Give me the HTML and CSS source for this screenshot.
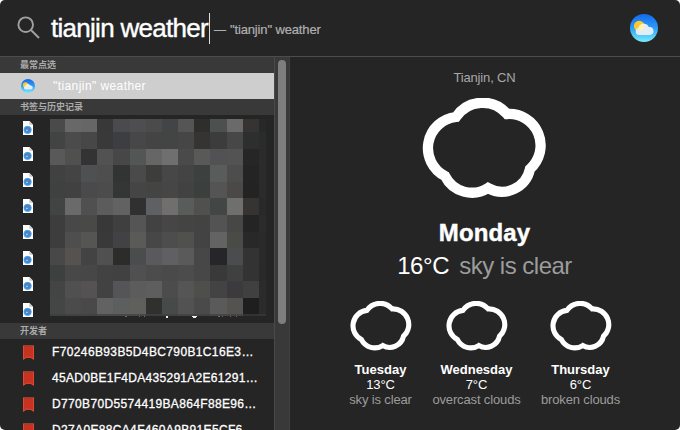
FILE: index.html
```html
<!DOCTYPE html>
<html lang="zh-CN">
<head>
<meta charset="utf-8">
<title>tianjin weather</title>
<link rel="stylesheet" href="styles.css">
</head>
<body>
<svg class="defs" aria-hidden="true">
  <defs>
    <linearGradient id="sky" x1="0" y1="0" x2="0" y2="1"><stop offset="0" stop-color="#1268ee"/><stop offset=".5" stop-color="#2e9df5"/><stop offset="1" stop-color="#78edfc"/></linearGradient>
    <symbol id="weather" viewBox="0 0 28 28">
      <circle cx="14" cy="14" r="14" fill="url(#sky)"/>
      <circle cx="9.2" cy="12" r="5.3" fill="#fdc92f"/>
      <path d="M9 21a3.6 3.6 0 0 1-.5-7.1A5.5 5.5 0 0 1 18.8 13a3.8 3.8 0 0 1 1.3 8Z" fill="#e3edf8"/>
      <path d="M8.6 14a5.5 5.5 0 0 1 5.7-4.2 5.3 5.3 0 0 1-4.6 7.2Z" fill="#fff2b5"/>
    </symbol>
    <symbol id="cloud" viewBox="42 38 125 101">
      <path d="M76 57A32 32 0 0 1 127 54A31.5 31.5 0 0 1 150 109A28.6 28.6 0 0 1 108 128A30 30 0 0 1 65 116A31.3 31.3 0 0 1 76 57Z" fill="none" stroke="#fff" stroke-width="10.3"/>
    </symbol>
    <symbol id="page" viewBox="0 0 10 14">
      <path d="M0 0H6.5L10 3.8V14H0Z" fill="#fff"/>
      <path d="M6.3 0L10 3.8H6.3Z" fill="#c9c9c9"/>
      <circle cx="4.6" cy="8.8" r="3.9" fill="#2f8ce0"/>
      <circle cx="4.6" cy="8.8" r="3.6" fill="none" stroke="#79aee0" stroke-width=".5"/>
      <path d="M2.7 10.6L4.1 8.3L5.1 9.3Z" fill="#e8f3fd"/>
      <path d="M6.7 6.7L4 8.2L5.2 9.4Z" fill="#e0523c"/>
    </symbol>
    <symbol id="mark" viewBox="0 0 11 15">
      <path d="M0 0H11V15L7.8 12.8H3.2L0 15Z" fill="#c73320"/>
      <path d="M0 .7H11" stroke="#96402f" stroke-width="1.4"/>
      <path d="M.5 1V14.2L3.2 12.3H7.8L10.5 14.2V1" fill="none" stroke="#dc4a33"/>
    </symbol>
  </defs>
</svg>
<div class="window">
  <header class="search">
    <svg class="lens" viewBox="0 0 24 24"><circle cx="8.7" cy="8.7" r="7.3"/><path d="M14 14L22 22"/></svg>
    <span class="query">tianjin weather</span><i class="caret"></i>
    <span class="hint"><span class="dash">—</span>"tianjin" weather</span>
    <svg class="app"><use href="#weather"/></svg>
  </header>
  <main class="body">
    <aside class="results">
      <h2>最常点选</h2>
      <div class="row selected"><svg class="mini"><use href="#weather"/></svg><span>"tianjin" weather</span></div>
      <h2>书签与历史记录</h2>
      <div class="history">
        <div class="pages">
          <svg><use href="#page"/></svg><svg><use href="#page"/></svg><svg><use href="#page"/></svg><svg><use href="#page"/></svg>
          <svg><use href="#page"/></svg><svg><use href="#page"/></svg><svg><use href="#page"/></svg><svg><use href="#page"/></svg>
        </div>
        <div>
          <div class="mosaic" id="mosaic"></div>
          <svg class="specks" viewBox="0 0 216 2"><path d="M116 0h2v2h-2zM142 0h5v1h-1v1h-3v-1h-1z" fill="#eee"/><path d="M75 0h2v1h-2zM89 0h1v1h-1zM94 0h1v1h-1zM168 0h2v1h-2zM172 0h1v1h-1zM180 0h1v1h-1zM186 0h1v1h-1z" fill="#706a60"/></svg>
        </div>
      </div>
      <h2>开发者</h2>
      <div class="row"><svg class="mark"><use href="#mark"/></svg><span class="c1">F70246B93B5D4BC790B1C16E3…</span></div>
      <div class="row"><svg class="mark"><use href="#mark"/></svg><span class="c2">45AD0BE1F4DA435291A2E61291…</span></div>
      <div class="row"><svg class="mark"><use href="#mark"/></svg><span class="c3">D770B70D5574419BA864F88E96…</span></div>
      <div class="row"><svg class="mark"><use href="#mark"/></svg><span class="c4">D27A0E88CA4F460A9B91E5CF6…</span></div>
    </aside>
    <div class="track"><div class="thumb"></div></div>
    <section class="preview">
      <div class="place">Tianjin, CN</div>
      <svg class="big"><use href="#cloud"/></svg>
      <div class="today">Monday</div>
      <div class="now"><span class="temp">16°C</span><span class="state">sky is clear</span></div>
      <div class="days">
        <div class="day"><svg><use href="#cloud"/></svg><b>Tuesday</b><span>13°C</span><em>sky is clear</em></div>
        <div class="day"><svg><use href="#cloud"/></svg><b>Wednesday</b><span>7°C</span><em>overcast clouds</em></div>
        <div class="day"><svg><use href="#cloud"/></svg><b>Thursday</b><span>6°C</span><em>broken clouds</em></div>
      </div>
    </section>
  </main>
</div>
<script src="mosaic.js"></script>
</body>
</html>
```
FILE: mosaic.js
```js
const rows = [
  "4a4a4a 686868 666666 383838 4b4b4d 4e4e50 4b4b4b 434446 555555 2e2e2c 4c504f 6a6a6a 353432 282828",
  "424444 4b4b4b 474747 393939 3c3e41 474747 444444 434545 464646 353430 3c3c3c 474747 2d2e2e 2a2c2c",
  "595959 50504e 333333 525252 474747 525655 666666 6f6f6f 4a4a4a 595957 525255 535353 262626 2b2b2b",
  "414141 444444 4e5052 4e4e4e 323434 4a4a4a 3d3d3b 474747 444444 3c403f 585c5b 4d4d4d 242424 2b2b2b",
  "3f4141 414141 4a4a4a 4c4c4c 343636 454545 444444 464646 424242 3b3f3e 545454 4b4947 232323 2b2b2b",
  "414443 6a6a6a 505050 5c5c5c 626262 303030 5e6063 706f6d 585c5b 50504e 424645 6f6f6d 353432 292929",
  "3d3d3d 484848 494947 383838 3f3f3f 555555 424242 464646 444442 434343 535353 474745 242424 2b2b2b",
  "3d3d3d 4e4e4e 555553 393939 424244 5a5a57 474747 4d4d4d 50504d 434343 636363 4a4a46 282828 2a2a2a",
  "484848 555250 434343 505050 2c2c2a 4a4c4e 5a5a5c 606062 5a5a5a 474747 262628 4a4c4e 333333 2a2a2a",
  "3c403f 484848 474747 424242 414141 505050 4c4c4c 4a4a4a 4c4c4c 474747 393939 404040 333333 292929",
  "444444 505050 555253 424242 555558 5c5c5c 5e5e5e 4c4c4c 555555 4e4e4b 434343 3b3b3e 404040 2b2b2b",
  "434645 4b4b4b 494949 626262 5c5f5e 5f5f5c 30302e 464a49 525252 4a4a4a 5a5a5a 555350 1e1e1e 2b2b2b",
  "3f3f3f 424242 424242 484848 484848 484848 3c3c3c 404040 444444 414141 464646 454545 323232 343434"
];
const grid = document.getElementById("mosaic");
rows.join(" ").split(" ").forEach(c => {
  const cell = document.createElement("i");
  cell.style.background = "#" + c;
  grid.append(cell);
});
```
FILE: styles.css
```css
* { box-sizing: border-box; }
body { margin: 0; background: #fff; font-family: "Liberation Sans", "Noto Sans CJK SC", sans-serif; color: #fff; }
svg { display: block; flex: none; }
.defs { position: absolute; width: 0; height: 0; }
.window { width: 680px; height: 430px; overflow: hidden; background: #252525; border-radius: 5px; display: flex; flex-direction: column; }
.search { height: 57px; flex: none; display: flex; align-items: center; padding: 0 22px 0 17px; border-bottom: 1px solid #4c4c4c; white-space: nowrap; }
.lens { width: 24px; height: 24px; fill: none; stroke: #a0a0a0; stroke-width: 1.9; }
.query { width: 158px; margin-left: 10px; font-size: 26px; letter-spacing: -.72px; -webkit-text-stroke: .4px #fff; }
.caret { width: 1px; height: 31px; background: #ddd; }
.hint { margin: 3px 0 0 4px; font-size: 13px; color: #b0b0b0; letter-spacing: -.14px; -webkit-text-stroke: .2px #b0b0b0; }
.dash { display: inline-block; width: 16px; font-size: 12px; }
.app { width: 28px; height: 28px; margin-left: auto; }
.body { flex: 1; min-height: 0; display: flex; }
.results { width: 274px; flex: none; overflow: hidden; }
h2 { margin: 0; height: 16px; padding-left: 20px; background: #393939; color: #aaa; font-size: 9px; line-height: 16px; font-weight: 700; font-family: "Noto Sans CJK SC", sans-serif; }
.row { height: 26px; display: flex; align-items: center; padding-left: 23px; font-size: 12px; white-space: nowrap; -webkit-text-stroke: .3px #fff; }
.row span { margin-left: 18px; }
.row .c1 { letter-spacing: .37px; }
.row .c2 { letter-spacing: .29px; }
.row .c3, .row .c4 { letter-spacing: .34px; }
.selected { background: #cecece; padding-left: 21px; -webkit-text-stroke: 0; }
.selected span { letter-spacing: .42px; }
.mini { width: 14px; height: 14px; }
.mark { width: 11px; height: 15px; }
.history { height: 208px; display: flex; }
.pages { width: 50px; padding: 6px 0 0 23px; display: flex; flex-direction: column; gap: 12px; }
.pages svg { width: 10px; height: 14px; }
.mosaic { margin-top: 4px; height: 197px; display: grid; grid-template-columns: 15px 16px 16px 16px 17px 16px 16px 16px 16px 16px 17px 16px 16px 7px; grid-template-rows: 13px 17px 16px 17px 16px 17px 17px 16px 17px 16px 17px 16px 2px; }
.specks { width: 216px; height: 2px; }
.track { width: 16px; flex: none; background: #393939; border-left: 1px solid #4a4a4a; border-right: 1px solid #3f3f3f; padding: 3px 0 0 3px; }
.thumb { width: 8px; height: 264px; border-radius: 4px; background: #7e7e7e; }
.preview { flex: 1; padding-right: 1px; display: flex; flex-direction: column; align-items: center; white-space: nowrap; }
.place { height: 41px; padding-top: 13px; font-size: 13px; line-height: 15px; color: #a8a8a8; letter-spacing: -.15px; }
.big { width: 125px; height: 101px; }
.today { margin-top: 19px; font-size: 24px; line-height: 30px; font-weight: bold; letter-spacing: .1px; -webkit-text-stroke: .4px #fff; }
.now { margin-top: 3px; font-size: 24px; line-height: 30px; display: flex; gap: 10px; }
.temp { letter-spacing: -.4px; }
.state { color: #9c9c9c; letter-spacing: -.5px; }
.days { margin-top: 20px; display: grid; grid-template-columns: 96px 96px 112px; }
.day { display: flex; flex-direction: column; align-items: center; font-size: 13px; line-height: 15px; }
.day svg { width: 62px; height: 50px; margin-bottom: 11px; }
.day span { letter-spacing: -.1px; }
.day em { font-style: normal; color: #9c9c9c; letter-spacing: -.14px; }
```
